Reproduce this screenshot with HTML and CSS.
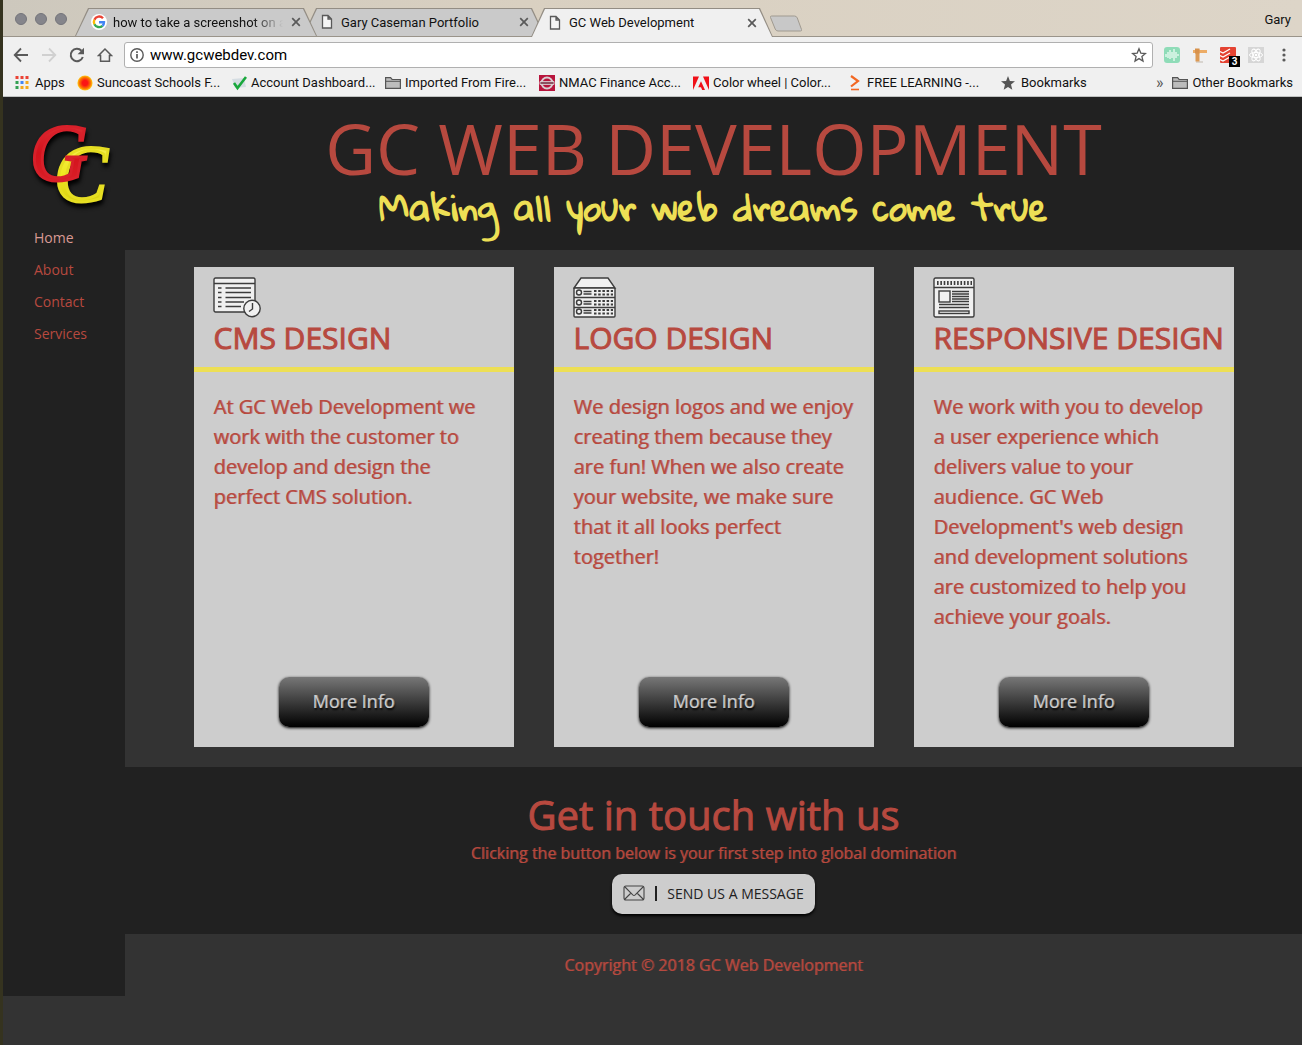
FILE: index.html
```html
<!DOCTYPE html>
<html lang="en">
<head>
<meta charset="utf-8">
<meta name="viewport" content="width=device-width, initial-scale=1">
<title>GC Web Development</title>
<link rel="stylesheet" href="styles.css">
</head>
<body>
<svg class="sprite" aria-hidden="true">
  <symbol id="doc" viewBox="0 0 12 16"><path d="M1.500 1.500h5.500l3.500 3.500v9h-9zM7 1.500v3.500h3.500" fill="#f5f5f5" stroke="#5a5a5a" stroke-width="1.300"/></symbol>
  <symbol id="close" viewBox="0 0 10 10"><path d="M1.200 1.200l7.600 7.600M8.800 1.200l-7.600 7.600" stroke="#5a5a5a" stroke-width="1.700"/></symbol>
  <symbol id="folder" viewBox="0 0 16 14"><path d="M.6 12.400V1.700h5l1.500 1.800h8.300v8.900z" fill="#bdbdbd" stroke="#555" stroke-width="1.200"/><path d="M1 5.300h14" stroke="#555"/></symbol>
</svg>
<div class="window">
  <header class="browser">
    <div class="tabstrip">
      <div class="lights"><i></i><i></i><i></i></div>
      <div class="tabs">
        <div class="tab first">
          <svg width="16" height="16" viewBox="0 0 16 16"><circle cx="8" cy="8" r="8" fill="#fff"/><g fill="none" stroke-width="2.400"><path d="M12 4.200A5.200 5.200 0 0 0 3.400 5.700" stroke="#ea4335"/><path d="M3.400 5.700a5.200 5.200 0 0 0 0 4.600" stroke="#fbbc05"/><path d="M3.400 10.300a5.200 5.200 0 0 0 8.100 1.500" stroke="#34a853"/><path d="M11.500 11.800A5 5 0 0 0 13 8.200H8" stroke="#4285f4"/></g></svg>
          <span class="tab-title fade">how to take a screenshot on a</span>
          <button class="x" aria-label="Close tab"><svg width="10" height="10"><use href="#close"/></svg></button>
        </div>
        <div class="tab">
          <svg width="16" height="16"><use href="#doc"/></svg>
          <span class="tab-title">Gary Caseman Portfolio</span>
          <button class="x" aria-label="Close tab"><svg width="10" height="10"><use href="#close"/></svg></button>
        </div>
        <div class="tab active">
          <svg width="16" height="16"><use href="#doc"/></svg>
          <span class="tab-title">GC Web Development</span>
          <button class="x" aria-label="Close tab"><svg width="10" height="10"><use href="#close"/></svg></button>
        </div>
      </div>
      <button class="newtab" aria-label="New tab"><svg width="34" height="18" viewBox="0 0 34 18"><path d="M2.500 1h23q2 0 2.800 2l4.200 11.500q.5 1.500-1 1.500H9q-2 0-2.800-2L1.500 2.500Q1.100 1 2.500 1z" fill="#c8c8c8" stroke="#a09a90"/></svg></button>
      <span class="user">Gary</span>
    </div>
    <div class="toolbar">
      <nav class="controls">
        <button aria-label="Back"><svg width="16" height="16" viewBox="0 0 16 16"><path d="M15 8H2M8 1.500L1.700 8 8 14.500" fill="none" stroke="#5a5a5a" stroke-width="1.800"/></svg></button>
        <button aria-label="Forward"><svg width="16" height="16" viewBox="0 0 16 16"><path d="M1 8h13M8 1.500L14.300 8 8 14.500" fill="none" stroke="#d0d0d0" stroke-width="1.800"/></svg></button>
        <button aria-label="Reload"><svg width="16" height="16" viewBox="0 0 16 16"><path d="M13.800 10A6.200 6.200 0 1 1 12.500 3.700" fill="none" stroke="#5a5a5a" stroke-width="2"/><path d="M15 .8v6.400H8.600z" fill="#5a5a5a"/></svg></button>
        <button aria-label="Home"><svg width="16" height="16" viewBox="0 0 18 16"><path d="M9 1.200L1.800 8.500H4v6.600h10V8.500h2.200z" fill="none" stroke="#5a5a5a" stroke-width="1.700"/></svg></button>
      </nav>
      <div class="address">
        <svg width="14" height="14" viewBox="0 0 14 14"><circle cx="7" cy="7" r="6.200" fill="none" stroke="#5a5a5a" stroke-width="1.400"/><path d="M7 6v4.500M7 3.200v1.700" stroke="#5a5a5a" stroke-width="1.700"/></svg>
        <input type="text" value="www.gcwebdev.com" aria-label="Address">
        <svg width="16" height="16" viewBox="0 0 16 16"><path d="M8 1.800l1.800 4.300 4.700.4-3.600 3 1.100 4.600L8 11.600l-4 2.500 1.100-4.600-3.600-3 4.700-.4z" fill="none" stroke="#5a5a5a" stroke-width="1.300"/></svg>
      </div>
      <div class="extensions">
        <svg width="16" height="16" viewBox="0 0 16 16"><rect width="16" height="16" rx="3" fill="#8fdcb8"/><path d="M2 7v3M4 5v6M6 3v9M8 5v6M10 2v12M12 5v6M14 7v2" stroke="#f3fff9" stroke-width="1.200"/></svg>
        <svg width="16" height="16" viewBox="0 0 16 16"><path d="M4 15h7" stroke="#d8d4cf" stroke-width="2"/><path d="M3.500 2.500h4v12h-4z" fill="#dc9a54"/><path d="M1 3h14v3H1z" fill="#ecac66"/><path d="M3 1.500h4.500v5H3z" fill="#d7914b"/></svg>
        <span class="badged"><svg width="16" height="16" viewBox="0 0 16 16"><rect width="16" height="16" rx="1" fill="#e44332"/><path d="M0 4.500l3 1.500 7-4M0 8.500l3 1.500 7-4M0 12.500l3 1.500 7-4" fill="none" stroke="#fff" stroke-width="1.300"/></svg><b>3</b></span>
        <svg width="16" height="16" viewBox="0 0 16 16"><rect width="16" height="16" fill="#d6d6d6"/><g fill="none" stroke="#fff"><ellipse cx="8" cy="8" rx="6.500" ry="2.600"/><ellipse cx="8" cy="8" rx="6.500" ry="2.600" transform="rotate(60 8 8)"/><ellipse cx="8" cy="8" rx="6.500" ry="2.600" transform="rotate(120 8 8)"/></g><circle cx="8" cy="8" r="1.300" fill="#fff"/></svg>
        <svg width="16" height="16" viewBox="0 0 16 16" fill="#5a5a5a"><circle cx="8" cy="3" r="1.600"/><circle cx="8" cy="8" r="1.600"/><circle cx="8" cy="13" r="1.600"/></svg>
      </div>
    </div>
    <nav class="bookmarks">
      <a class="apps" href="#"><svg width="14" height="14" viewBox="0 0 14 14"><path d="M.5 0h3v3h-3zM5.500 0h3v3h-3zM10.500 0h3v3h-3z" fill="#ea4335"/><path d="M.5 5h3v3h-3zM.5 10h3v3h-3z" fill="#34a053"/><path d="M5.500 5h3v3h-3z" fill="#4285f4"/><path d="M10.500 5h3v3h-3zM5.500 10h3v3h-3zM10.500 10h3v3h-3z" fill="#f4a81d"/></svg>Apps</a>
      <a href="#"><svg width="16" height="16" viewBox="0 0 16 16"><defs><radialGradient id="sun"><stop offset=".35" stop-color="#fb1515"/><stop offset=".75" stop-color="#fb7a00"/><stop offset="1" stop-color="#ffcf1c"/></radialGradient></defs><circle cx="8" cy="8" r="7.600" fill="url(#sun)"/></svg>Suncoast Schools F...</a>
      <a href="#"><svg width="16" height="16" viewBox="0 0 16 16"><path d="M1 4l12-1 2 9-11 1z" fill="#d5dde2"/><path d="M3 8l3.500 5L15 2" fill="none" stroke="#19a83c" stroke-width="2.600"/></svg>Account Dashboard...</a>
      <a href="#"><svg width="16" height="14"><use href="#folder"/></svg>Imported From Fire...</a>
      <a href="#"><svg width="16" height="16" viewBox="0 0 16 16"><path d="M0 0h16v16H0z" fill="#b8143c"/><circle cx="8" cy="8" r="5.500" fill="none" stroke="#d8cfd2" stroke-width="2"/><path d="M1 6.500h14v3H1z" fill="#8b5361" stroke="#e5dcdf" stroke-width=".8"/></svg>NMAC Finance Acc...</a>
      <a href="#"><svg width="16" height="16" viewBox="0 0 16 16"><path d="M0 1.500h6L0 15zM10 1.500h6V15zM8 6.300l4 8.700H9.200L8 12.300H5.200z" fill="#f01018"/></svg>Color wheel | Color...</a>
      <a href="#"><svg width="16" height="16" viewBox="0 0 16 16"><path d="M4 1l7 5-7 5.500" fill="none" stroke="#f26722" stroke-width="2.200"/><path d="M4 14.500h8" stroke="#f26722" stroke-width="1.600"/></svg>FREE LEARNING -...</a>
      <a class="last" href="#"><svg width="14" height="14" viewBox="0 0 14 14"><path d="M7 0l1.900 4.900 5.100.4-4 3.300 1.300 5.100L7 10.900l-4.300 2.800L4 8.600 0 5.300l5.100-.4z" fill="#555"/></svg>Bookmarks</a>
      <span class="more">»</span>
      <a class="other" href="#"><svg width="16" height="14"><use href="#folder"/></svg>Other Bookmarks</a>
    </nav>
  </header>

  <div class="site">
    <aside class="sidebar">
      <svg class="logo" width="84" height="90" viewBox="0 0 84 90" role="img" aria-label="GC">
        <defs>
          <linearGradient id="red" x2="0" y2="1"><stop offset="0" stop-color="#e33b41"/><stop offset=".5" stop-color="#d3121c"/><stop offset="1" stop-color="#dc252c"/></linearGradient>
          <linearGradient id="yellow" x2="0" y2="1"><stop offset="0" stop-color="#f9f06a"/><stop offset=".5" stop-color="#efe81f"/><stop offset="1" stop-color="#cfc40c"/></linearGradient>
        </defs>
        <g class="letters"><text x="25" y="80" fill="url(#yellow)" stroke="#e6de22">C</text><text x="1" y="59" fill="url(#red)" stroke="#d8202a">G</text></g>
      </svg>
      <nav>
        <a class="current" href="#">Home</a>
        <a href="#">About</a>
        <a href="#">Contact</a>
        <a href="#">Services</a>
      </nav>
    </aside>
    <main>
      <section class="hero">
        <h1>GC WEB DEVELOPMENT</h1>
        <p>Making all your web dreams come true</p>
      </section>
      <section class="cards">
        <article class="card">
          <div class="card-head">
            <svg width="50" height="42" viewBox="0 0 50 42" fill="none" stroke="#3c3c3c" stroke-width="1.400"><rect x="1" y="1" width="41" height="34" rx="1.500" fill="#f0f0f0"/><path d="M1 6.500h41M5 11h3.500M5 15.500h3.500M5 20.500h3.500M5 25h3.500M5 29.500h3.500M12.500 11H38M12.500 15.500H38M12.500 20.500H38M12.500 25H31M12.500 29.500H28"/><circle cx="39" cy="31.500" r="8.200" fill="#f0f0f0"/><path d="M39.500 26v6l-3.500 2.500"/></svg>
            <h2>CMS DESIGN</h2>
          </div>
          <p>At GC Web Development we work with the customer to develop and design the perfect CMS solution.</p>
          <button class="info">More Info</button>
        </article>
        <article class="card">
          <div class="card-head">
            <svg width="50" height="42" viewBox="0 0 50 42" fill="none" stroke="#3c3c3c" stroke-width="1.400"><path d="M1 11L8 1h27l7 10z" fill="#f0f0f0"/><rect x="1" y="11" width="41" height="29" rx="1" fill="#f0f0f0"/><path d="M1 20.500h41M1 30.500h41"/><g id="units"><circle cx="6" cy="15.500" r="2.500"/><path d="M10.500 14.500h8M10.500 17h8"/><path d="M21 14h19M21 17.500h19" stroke-width="2.200" stroke-dasharray="2.500 1.700"/></g><use href="#units" y="10"/><use href="#units" y="19"/></svg>
            <h2>LOGO DESIGN</h2>
          </div>
          <p>We design logos and we enjoy creating them because they are fun! When we also create your website, we make sure that it all looks perfect together!</p>
          <button class="info">More Info</button>
        </article>
        <article class="card">
          <div class="card-head">
            <svg width="50" height="42" viewBox="0 0 50 42" fill="none" stroke="#3c3c3c" stroke-width="1.400"><rect x="1" y="1" width="40" height="39" rx="1.500" fill="#f0f0f0"/><path d="M1 10.500h40"/><path d="M4 6h35" stroke-width="4" stroke-dasharray="1.600 1.750"/><rect x="6" y="14" width="11" height="11"/><path d="M19 14.500h17M19 17h17M19 19.500h17M19 22h17M19 24.500h17M6 27.500h30M6 30.500h30"/><rect x="6" y="34" width="30" height="2.500"/></svg>
            <h2>RESPONSIVE DESIGN</h2>
          </div>
          <p>We work with you to develop a user experience which delivers value to your audience. GC Web Development's web design and development solutions are customized to help you achieve your goals.</p>
          <button class="info">More Info</button>
        </article>
      </section>
      <section class="contact">
        <h2>Get in touch with us</h2>
        <p>Clicking the button below is your first step into global domination</p>
        <button class="message"><svg width="22" height="16" viewBox="0 0 22 16" fill="none" stroke="#444" stroke-width="1.100"><rect x="1" y="1" width="20" height="14" rx="2"/><path d="M1.500 1.500L9 9q2 3 4 0l7.500-7.500M1.500 14.500L8 8M20.500 14.500L14 8"/></svg><i></i>SEND US A MESSAGE</button>
      </section>
      <footer>Copyright © 2018 GC Web Development</footer>
    </main>
  </div>
</div>
</body>
</html>
```
FILE: styles.css
```css
* { box-sizing: border-box; }

body {
  margin: 0;
  background: #333;
  font-family: "Open Sans", sans-serif;
  color: #b7493f;
}

h1, h2, p { margin: 0; font-weight: 400; }
a { color: inherit; text-decoration: none; }
button { padding: 0; border: 0; background: none; font-family: inherit; cursor: pointer; }
svg { flex: none; display: block; }
.sprite { position: absolute; width: 0; height: 0; }

.window {
  min-height: 100vh;
  border-left: 3px solid #35331f;
}

/* Browser frame */
.browser {
  background: #f0f0f0;
  border-bottom: 1px solid #bfc1c0;
  color: #111;
  font-family: Roboto, sans-serif;
  font-size: 13px;
}

.tabstrip {
  display: flex;
  height: 37px;
  padding-top: 8px;
  background: linear-gradient(90deg, #cdc8bd, #d9d0c1 40%, #ddd5c8);
  border-bottom: 1px solid #9a948a;
}

.lights { display: flex; gap: 8px; width: 72px; padding: 5px 0 0 12px; }
.lights i { width: 12px; height: 12px; border: 1px solid #74747a; border-radius: 50%; background: #85858b; }

.tabs { display: flex; }
.tab {
  position: relative;
  isolation: isolate;
  display: flex;
  align-items: center;
  width: 242px;
  height: 28px;
  padding: 0 13px 0 16px;
  background: #938d84;
  clip-path: polygon(13px 0, calc(100% - 13px) 0, 100% 100%, 0 100%);
}
.tab::before {
  content: "";
  position: absolute;
  z-index: -1;
  inset: 1px 1px 0;
  background: #cacaca;
  clip-path: polygon(13px 0, calc(100% - 13px) 0, 100% 100%, 0 100%);
}
.tab + .tab { margin-left: -14px; }
.tab.first { z-index: 1; }
.tab.active { z-index: 2; height: 29px; }
.tab.active::before { background: #f0f0f0; }
.tab-title { flex: 1; min-width: 0; margin-left: 6px; overflow: hidden; white-space: nowrap; }
.fade { -webkit-mask-image: linear-gradient(90deg, #000 82%, transparent); mask-image: linear-gradient(90deg, #000 82%, transparent); }
.x { margin: 0 3px 0 8px; }
.newtab { align-self: flex-start; margin-top: 7px; margin-left: -4px; }
.user { margin-left: auto; padding: 4px 11px 0 0; }

.toolbar { display: flex; align-items: center; height: 36px; padding-right: 10px; }
.controls { display: flex; width: 121px; padding-left: 10px; gap: 12px; }
.address {
  flex: 1;
  display: flex;
  align-items: center;
  height: 26px;
  padding: 0 5px;
  border: 1px solid #b0b0b0;
  border-radius: 3px;
  background: #fff;
}
.address input {
  flex: 1;
  min-width: 0;
  padding: 0 6px;
  border: 0;
  outline: 0;
  background: none;
  font-family: inherit;
  font-size: 15px;
  color: #000;
}
.extensions { display: flex; gap: 12px; padding-left: 11px; }
.badged { position: relative; }
.badged b {
  position: absolute;
  left: 9px;
  top: 9px;
  width: 11px;
  background: #000;
  color: #fff;
  font-size: 10px;
  line-height: 11px;
  text-align: center;
}

.bookmarks { display: flex; align-items: center; height: 23px; padding: 0 9px 4px 12px; white-space: nowrap; }
.bookmarks a { display: flex; align-items: center; gap: 4px; width: 154px; }
.bookmarks .apps { width: 62px; gap: 6px; }
.bookmarks .last { gap: 6px; width: auto; }
.bookmarks .other { width: auto; }
.more { margin: 0 9px 0 auto; color: #555; font-size: 16px; }

/* Site */
.site { display: flex; }
.sidebar { flex: none; width: 122px; padding-top: 24px; background: #212121; }
.logo { margin-left: 26px; overflow: visible; }
.letters { font: italic 80px "Liberation Serif", serif; stroke-width: 3px; filter: drop-shadow(1px 4px 2px #000); }
.sidebar nav { display: flex; flex-direction: column; padding: 11px 0 0 31px; font-size: 14px; line-height: 32px; }
.sidebar .current { color: #d99a94; }

main { flex: 1; min-width: 0; }
.hero { padding: 12px 20px 23px; background: #212121; text-align: center; }
.hero h1 { font-size: 70px; line-height: 78px; }
.hero p {
  color: #eddf55;
  font-family: "Gloria Hallelujah", "Open Sans", sans-serif;
  font-size: 35px;
  font-weight: bold;
  line-height: 40px;
}

.cards {
  display: flex;
  flex-wrap: wrap;
  justify-content: center;
  gap: 40px;
  padding: 17px 20px 20px;
}
.card {
  display: flex;
  flex-direction: column;
  width: 320px;
  min-height: 480px;
  padding-bottom: 20px;
  background: #cdcdcd;
}
.card h2, .contact h2 { -webkit-text-stroke: 1px currentColor; }
.card p, .contact p, footer { text-shadow: 1px 0 rgba(183, 73, 63, 0.6); }
.card-head { padding: 10px 0 10px 20px; border-bottom: 5px solid #eddf55; }
.card-head svg { margin-left: -1px; }
.card h2 { font-size: 30px; line-height: 38px; white-space: nowrap; }
.card p { padding: 20px 20px; font-size: 20px; line-height: 30px; }
.info {
  align-self: center;
  width: 150px;
  height: 50px;
  margin-top: auto;
  padding-bottom: 2px;
  border-radius: 10px;
  background: linear-gradient(#777, #000);
  box-shadow: 0 1px 3px #000;
  color: #cdcdcd;
  font-size: 18px;
  text-shadow: 1px 0 rgba(205, 205, 205, 0.5), 1px 2px 2px #000;
}

.contact {
  display: flex;
  flex-direction: column;
  align-items: center;
  padding: 20px;
  background: #212121;
  text-align: center;
}
.contact h2 { font-size: 40px; line-height: 56px; }
.contact p { font-size: 16px; line-height: 20px; }
.message {
  display: flex;
  align-items: center;
  height: 40px;
  margin-top: 11px;
  padding: 0 11px 2px;
  border-radius: 10px;
  background: #cdcdcd;
  box-shadow: 0 2px 3px #000;
  color: #212121;
  font-size: 14px;
}
.message i { width: 2px; height: 15px; margin: 0 10px; background: #212121; }
footer { padding: 20px; text-align: center; font-size: 16px; line-height: 22px; }
```
